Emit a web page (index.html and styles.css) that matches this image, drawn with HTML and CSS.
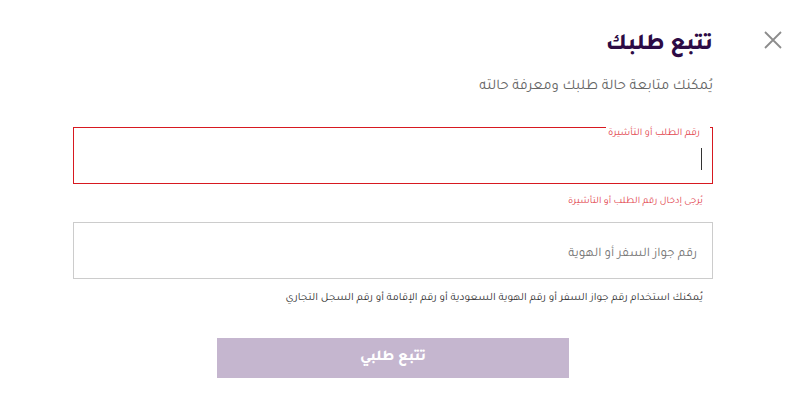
FILE: index.html
```html
<!DOCTYPE html>
<html lang="ar" dir="rtl">
<head>
<meta charset="utf-8">
<link rel="stylesheet" href="styles.css">
</head>
<body>
<div class="modal">
  <button class="close" aria-label="close">
    <svg width="18" height="18" viewBox="0 0 18 18"><path d="M1 1L17 17M17 1L1 17" stroke="#8c8c8c" stroke-width="1.8" fill="none"/></svg>
  </button>
  <h1 class="title">تتبع طلبك</h1>
  <p class="subtitle">يُمكنك متابعة حالة طلبك ومعرفة حالته</p>
  <form class="form">
    <fieldset class="field-error">
      <legend class="legend">رقم الطلب أو التأشيرة</legend>
      <div class="input-area"><span class="caret"></span></div>
    </fieldset>
    <div class="error">يُرجى إدخال رقم الطلب أو التأشيرة</div>
    <div class="field-plain">
      <span class="placeholder">رقم جواز السفر أو الهوية</span>
    </div>
    <div class="hint">يُمكنك استخدام رقم جواز السفر أو رقم الهوية السعودية أو رقم الإقامة أو رقم السجل التجاري</div>
    <div class="actions">
      <button type="button" class="submit">تتبع طلبي</button>
    </div>
  </form>
</div>
</body>
</html>
```
FILE: styles.css
```css
* { box-sizing: border-box; }
html, body { margin: 0; padding: 0; background: #fff; }
body {
  width: 802px;
  height: 404px;
  overflow: hidden;
  font-family: "Tajawal", "Cairo", "Noto Sans Arabic", "Noto Kufi Arabic", "DejaVu Sans", sans-serif;
}
.modal {
  position: relative;
  padding: 30px 89px 0 73px;
  display: flex;
  flex-direction: column;
}
.close {
  position: absolute;
  top: 31px;
  left: 764px;
  width: 18px;
  height: 18px;
  padding: 0;
  border: 0;
  background: none;
  display: flex;
}
.title {
  margin: 0;
  font-size: 23px;
  line-height: 32px;
  font-weight: 800;
  color: #2d0b45;
}
.subtitle {
  margin: 13px 0 0;
  font-size: 14.75px;
  line-height: 24px;
  color: #666;
}
.form {
  margin-top: 15px;
  display: flex;
  flex-direction: column;
}
.field-error {
  margin: 0;
  padding: 0;
  min-width: 0;
  border: 1px solid #d71920;
}
.legend {
  padding: 14px 10px 0 2px;
  margin-right: 2px;
  font-size: 10.3px;
  line-height: 12px;
  color: #e2474f;
}
.input-area {
  height: 43px;
  padding: 8px 10px 0 0;
}
.caret {
  display: block;
  width: 1px;
  height: 22px;
  background: #333;
}
.error {
  margin-top: 11px;
  padding-right: 10px;
  font-size: 10px;
  line-height: 14px;
  color: #e2474f;
}
.field-plain {
  margin-top: 13px;
  height: 57px;
  border: 1px solid #ccc;
  display: flex;
  align-items: center;
  padding: 8px 15px 0 0;
}
.placeholder {
  font-size: 13.1px;
  color: #777;
}
.hint {
  margin-top: 13px;
  padding-right: 10px;
  font-size: 11.2px;
  line-height: 14px;
  color: #333;
}
.actions {
  display: flex;
  justify-content: center;
  margin-top: 32px;
}
.submit {
  width: 352px;
  height: 40px;
  border: 0;
  padding: 0;
  background: #c5b6cf;
  color: #fff;
  font-family: inherit;
  font-size: 15px;
  font-weight: 800;
}
```
